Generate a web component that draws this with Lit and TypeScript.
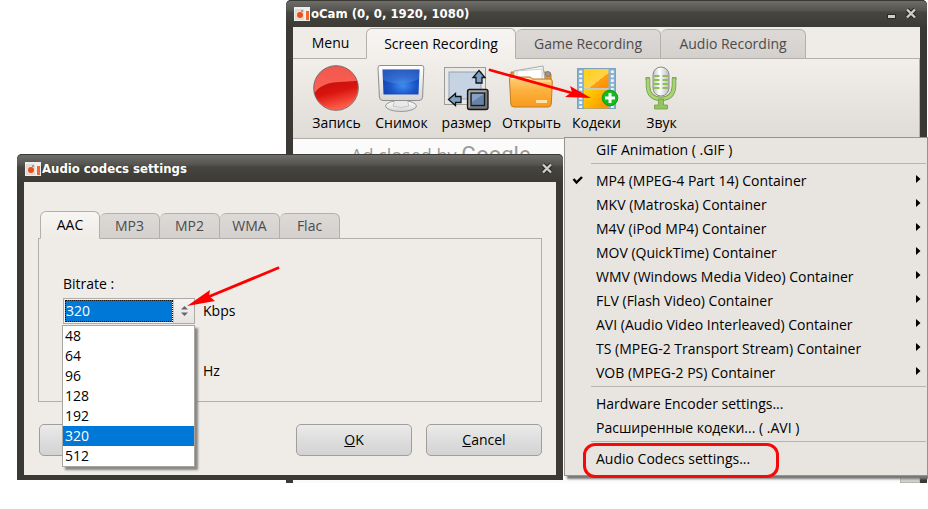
import { LitElement, html, css, svg, nothing } from "lit";
import { customElement, property, state } from "lit/decorators.js";
import { classMap } from "lit/directives/class-map.js";

const logo = html`<svg class="logo" width="18" height="16" viewBox="0 0 18 16" aria-hidden="true">
  <rect x="1" y="1" width="16" height="14" fill="#f0eeec" />
  <rect x="2" y="3" width="9" height="11" fill="#dedad7" />
  <circle cx="7" cy="9" r="4" fill="#f8d9cb" />
  <circle cx="7" cy="9" r="3" fill="#e8501a" />
  <circle cx="9" cy="5" r="1" fill="#888" />
  <rect x="13" y="5" width="3" height="9" fill="#ef6a2c" />
</svg>`;

const closeGlyph = html`<svg width="12" height="12" viewBox="0 0 12 12" aria-hidden="true">
  <path d="M2 1.500 L10 9.500 M10 1.500 L2 9.500" stroke="#2a2925" stroke-width="4.500" />
  <path d="M2 1.500 L10 9.500 M10 1.500 L2 9.500" stroke="#cfceca" stroke-width="2.400" />
</svg>`;

const icons: Record<string, unknown> = {
  record: svg`
    <defs>
      <linearGradient id="r1" x1="0" y1="0" x2="0" y2="1"><stop offset="0" stop-color="#f2564c"/><stop offset="1" stop-color="#ff6a5c"/></linearGradient>
      <linearGradient id="r2" x1="0" y1="0" x2="0.4" y2="1"><stop offset="0" stop-color="#c40d08"/><stop offset="0.5" stop-color="#d91510"/><stop offset="1" stop-color="#ff5a48"/></linearGradient>
    </defs>
    <circle cx="24" cy="24" r="22.3" fill="url(#r1)" stroke="#7b6a68" stroke-width="1"/>
    <path d="M2.400 29 C8 21 17 18.500 28 18 C36 17.500 42 17 45 17 A22 22 0 0 1 2.400 29Z" fill="url(#r2)"/>`,
  monitor: svg`
    <defs>
      <radialGradient id="m1" cx="0.55" cy="0.65" r="0.7"><stop offset="0" stop-color="#3f8df0"/><stop offset="0.5" stop-color="#1c55c8"/><stop offset="1" stop-color="#0b3aa8"/></radialGradient>
      <linearGradient id="m2" x1="0" y1="0" x2="0" y2="1"><stop offset="0" stop-color="#fff"/><stop offset="1" stop-color="#d6d6d6"/></linearGradient>
    </defs>
    <g transform="translate(-1 0)">
      <ellipse cx="25" cy="42" rx="15.500" ry="5.500" fill="url(#m2)" stroke="#9a9a9a"/>
      <path d="M19 35 H31 L33 42 Q25 45 17 42Z" fill="#e9e9e9" stroke="#c5c5c5"/>
      <path d="M4 1.500 H46 Q48 1.500 47.800 4 L46.600 33 Q46.400 36.500 43 36.500 H7 Q3.600 36.500 3.400 33 L2 4 Q2 1.500 4 1.500Z" fill="url(#m2)" stroke="#8f8f8f"/>
      <path d="M6.500 5.500 H43.500 L42.500 30.500 H7.500Z" fill="url(#m1)"/>
      <path d="M6.500 5.500 H43.500 L43 15 C30 21 18 21 7 16Z" fill="#6aa4ee" opacity="0.3"/>
    </g>`,
  resize: svg`
    <g transform="translate(-1 -1)">
      <rect x="3.500" y="4.500" width="41" height="37" fill="#e8e8e6" stroke="#9c9c9a"/>
      <rect x="8" y="9" width="32" height="27" fill="#c6d3e3" stroke="#93a2b5"/>
      <path d="M38 7.500 L44 14.500 H41 V20 H35 V14.500 H32Z" fill="#7ea0c8" stroke="#111" stroke-width="1.300"/>
      <path d="M7.500 36.500 L14.500 30.500 V33.500 H20 V39.500 H14.500 V42.500Z" fill="#7ea0c8" stroke="#111" stroke-width="1.300"/>
      <rect x="26.500" y="26.500" width="20.500" height="20" rx="2" fill="#777" stroke="#161616" stroke-width="1.300"/>
      <path d="M28 27.500 H46 L43 30 H30 V43 L27.500 45Z" fill="#a9a9a9"/>
      <rect x="30" y="30" width="13.500" height="12.500" fill="#6583a9" stroke="#1a1a1a" stroke-width="1.300"/>
      <path d="M31 31 H43 L31 39Z" fill="#86a3c6"/>
    </g>`,
  folder: svg`
    <defs>
      <linearGradient id="f1" x1="0" y1="0" x2="0" y2="1"><stop offset="0" stop-color="#ffcf7c"/><stop offset="0.450" stop-color="#fdb13f"/><stop offset="1" stop-color="#f79a1c"/></linearGradient>
    </defs>
    <path d="M4 8 H41 Q44 8 44 11 V18 H4Z" fill="#e59a2d" stroke="#b97a2a"/>
    <path d="M7 7 L36 2 L38 16 H7Z" fill="#f7f7f7" stroke="#a8a8a8"/>
    <path d="M10 7 L35 5 V16 H10Z" fill="#fff" stroke="#bdbdbd" stroke-width="0.700"/>
    <circle cx="41" cy="10" r="2.500" fill="#999" stroke="#666" stroke-width="0.600"/>
    <path d="M3.500 13 H23 L26 15 H43 Q45.500 15 45.300 18 L44.300 40 Q44 43 41 43 H7 Q4 43 3.800 40 L2.500 16 Q2.500 13 3.500 13Z" fill="url(#f1)" stroke="#c07d25"/>
    <path d="M4 14.500 H22 L25 17 H44" fill="none" stroke="#ffe8ba" stroke-width="1.200"/>
    <rect x="29" y="36" width="11" height="3" fill="#ffe3a6"/>`,
  film: svg`
    <defs>
      <linearGradient id="c1" x1="0" y1="0" x2="1" y2="1"><stop offset="0" stop-color="#ffd012"/><stop offset="0.600" stop-color="#ffd34a"/><stop offset="0.610" stop-color="#ff9f10"/><stop offset="1" stop-color="#ff8a00"/></linearGradient>
      <linearGradient id="c2" x1="0" y1="0" x2="1" y2="0.600"><stop offset="0" stop-color="#ffd800"/><stop offset="1" stop-color="#ff9700"/></linearGradient>
    </defs>
    <rect x="5.500" y="4.500" width="38" height="40" fill="#86b1d0" stroke="#7ba3c0"/>
    <rect x="12" y="5" width="24.500" height="19" fill="url(#c1)"/>
    <rect x="12" y="26" width="24.500" height="18.500" fill="url(#c2)"/>
    <path d="M12 25 H36.500" stroke="#c9cfc0" stroke-width="1.800"/>
    <path d="M8.700 6.500 V44 M40.300 6.500 V44" stroke="#eff6fa" stroke-width="3" stroke-dasharray="2.600 1.800"/>
    <circle cx="38" cy="34" r="7.800" fill="#14bb1c" stroke="#0e9a18"/>
    <path d="M38 29 V39 M33 34 H43" stroke="#fff" stroke-width="3"/>`,
  mic: svg`
    <defs>
      <linearGradient id="s1" x1="0" y1="0" x2="1" y2="0"><stop offset="0" stop-color="#c2c2c2"/><stop offset="0.400" stop-color="#fff"/><stop offset="1" stop-color="#bdbdbd"/></linearGradient>
    </defs>
    <path d="M8.500 14.500 H13 M35 14.500 H39.500" stroke="#7fae52" stroke-width="3"/>
    <path d="M11 14.500 V22 Q11.500 34.500 24 35 Q36.500 34.500 37 22 V14.500" fill="none" stroke="#6e9a45" stroke-width="4.500"/>
    <path d="M11 14.500 V22 Q11.500 34.500 24 35 Q36.500 34.500 37 22 V14.500" fill="none" stroke="#a9d375" stroke-width="3"/>
    <path d="M21.500 35 H26.500 V41 H30.500 V45 H17.500 V41 H21.500Z" fill="#93c45d" stroke="#72a048" stroke-width="0.800"/>
    <rect x="16" y="3" width="16" height="29" rx="8" fill="url(#s1)" stroke="#8a8a8a"/>
    <path d="M17 12 H22.500 M25.500 12 H31 M17 16 H22.500 M25.500 16 H31 M17 20 H22.500 M25.500 20 H31 M17 24 H22.500 M25.500 24 H31" stroke="#8cc152" stroke-width="1.800"/>`,
};

const tools = [
  { icon: "record", label: "Запись" },
  { icon: "monitor", label: "Снимок" },
  { icon: "resize", label: "размер" },
  { icon: "folder", label: "Открыть" },
  { icon: "film", label: "Кодеки" },
  { icon: "mic", label: "Звук" },
];

const containers = [
  "MP4 (MPEG-4 Part 14) Container",
  "MKV (Matroska) Container",
  "M4V (iPod MP4) Container",
  "MOV (QuickTime) Container",
  "WMV (Windows Media Video) Container",
  "FLV (Flash Video) Container",
  "AVI (Audio Video Interleaved) Container",
  "TS (MPEG-2 Transport Stream) Container",
  "VOB (MPEG-2 PS) Container",
];

const shared = css`
  * { box-sizing: border-box; }
  button, select { font: inherit; color: inherit; margin: 0; padding: 0; border: 0; background: none; }
  svg { display: block; flex: none; }
  .titlebar {
    display: flex; align-items: center; height: 28px; padding: 0 10px 0 7px;
    background: linear-gradient(#6e6d69, #55544f 36%, #46453f 44%, #3b3a35);
    border-radius: 5px 5px 0 0; border-top: 1px solid #3a3934;
    color: #fff; font: bold 13px/20px "DejaVu Sans Condensed", "DejaVu Sans", sans-serif;
  }
  .titlebar h1 { margin: 0 auto 0 0; font: inherit; white-space: nowrap; }
  .tab {
    height: 29px; align-self: flex-end; color: #4c4c4c;
    background: linear-gradient(#dcd9d7, #d4d0ce);
    border: 1px solid #b3b0ac; border-left-width: 0; border-radius: 6px 6px 0 0;
  }
  .tab.on {
    color: #000; background: linear-gradient(#f7f5f3, #efece7);
    border-left-width: 1px; border-bottom-color: transparent;
  }
`;

@customElement("ocam-window")
class OcamWindow extends LitElement {
  static styles = [shared, css`
    :host { display: block; border-radius: 5px 5px 0 0; background: #3a3934; }
    .buttons { display: flex; gap: 8px; align-items: center; }
    .titlebar { height: 27px; }
    .body { margin: 0 7px; background: #efece7; }
    .tabs { display: flex; height: 32px; box-shadow: inset 0 -1px #b3b0ac; }
    .menu { width: 73px; height: 32px; padding-left: 2px; }
    .tab { width: 145px; height: 30px; }
    .tab.on { width: 150px; height: 31px; background: linear-gradient(#f7f5f3, #f2efeb); border-bottom-color: #f2efeb; }
    .toolbar {
      display: flex; height: 80px; padding: 5px 0 0 11px;
      background: linear-gradient(#f2efeb, #dfdcd7);
      border: 1px solid #b3b0ac; border-width: 0 1px 1px 0;
    }
    .tool { width: 65px; display: flex; flex-direction: column; align-items: center; gap: 1px; line-height: 20px; white-space: nowrap; }
    .tool svg { margin-right: 2px; }
    .ad { display: flex; justify-content: space-between; min-height: 344px; background: #fbfbfb; }
    .ad p { margin: 0; padding: 3px 0 0 58px; color: #9a9a9a; font: 18px/26px "Open Sans", sans-serif; }
    .ad b { font: 22px/26px Roboto, sans-serif; }
    .scroll { width: 20px; background: #d4d2ce; border: 1px solid #b8b5b1; }
  `];

  render() {
    return html`
      <header class="titlebar">
        ${logo}<h1>oCam (0, 0, 1920, 1080)</h1>
        <div class="buttons">
          <button aria-label="Minimize"><svg width="12" height="12" viewBox="0 0 12 12">
            <rect x="2" y="6" width="9" height="5" fill="#2a2925" /><rect x="3" y="7" width="7" height="3" fill="#cfceca" /></svg></button>
          <button aria-label="Close">${closeGlyph}</button>
        </div>
      </header>
      <div class="body">
        <nav class="tabs">
          <button class="menu">Menu</button>
          <button class="tab on">Screen Recording</button>
          <button class="tab">Game Recording</button>
          <button class="tab">Audio Recording</button>
        </nav>
        <div class="toolbar">
          ${tools.map((t) => html`<button class="tool">
            <svg width="48" height="48" viewBox="0 0 48 48" aria-hidden="true">${icons[t.icon]}</svg>${t.label}
          </button>`)}
        </div>
        <div class="ad"><p>Ad closed by <b>Google</b></p><div class="scroll"></div></div>
      </div>`;
  }
}

@customElement("codec-menu")
class CodecMenu extends LitElement {
  @property({ type: Number }) checked = 0;

  static styles = [shared, css`
    :host {
      display: block; background: #e8e5e0; border: 1px solid #96938f;
      padding-bottom: 4px; box-shadow: 3px 3px 2px #777;
    }
    .item { position: relative; display: flex; align-items: center; width: 100%; height: 24px; padding: 0 6px 0 7px; text-align: left; white-space: nowrap; color: #000; }
    .mark { width: 24px; flex: none; }
    .label { flex: 1; }
    .sep { height: 7px; margin: 0 1px 0 26px; border: 0; border-top: 1px solid transparent; background: linear-gradient(#b7b4b0, #b7b4b0) top / 100% 1px no-repeat; }
    .ring { position: absolute; left: 18px; top: -4px; width: 196px; height: 35px; border: 3px solid #f50a0a; border-radius: 12px; }
  `];

  private item(label: string, o: { check?: boolean; sub?: boolean; ring?: boolean } = {}) {
    return html`<button class="item" role="menuitem">
      <span class="mark">${o.check
        ? html`<svg width="12" height="10" viewBox="0 0 12 10"><path d="M1.500 3 L4.500 6.500 L10 1" fill="none" stroke="#000" stroke-width="2.400" /></svg>`
        : nothing}</span>
      <span class="label">${label}</span>
      ${o.sub ? html`<svg width="5" height="12" viewBox="0 0 5 12"><path d="M0 0 L4.500 4 L0 8Z" fill="#000" /></svg>` : nothing}
      ${o.ring ? html`<span class="ring"></span>` : nothing}
    </button>`;
  }

  render() {
    return html`
      ${this.item("GIF Animation ( .GIF )")}
      <hr class="sep" />
      ${containers.map((c, i) => this.item(c, { check: i === this.checked, sub: true }))}
      <hr class="sep" />
      ${this.item("Hardware Encoder settings...")}
      ${this.item("Расширенные кодеки... ( .AVI )")}
      <hr class="sep" />
      ${this.item("Audio Codecs settings...", { ring: true })}`;
  }
}

@customElement("codec-dialog")
class CodecDialog extends LitElement {
  @state() private bitrate = "320";
  @state() private tab = "AAC";

  private rates = ["48", "64", "96", "128", "192", "320", "512"];

  static styles = [shared, css`
    :host { display: block; border-radius: 5px 5px 0 0; background: #3a3934; padding-bottom: 5px; }
    .body { margin: 0 7px; padding: 29px 14px 19px; background: #efece7; }
    .tabs { display: flex; height: 28px; padding-left: 2px; margin-bottom: -1px; position: relative; }
    .tab { width: 60px; height: 26px; }
    .tab.on { height: 28px; border-bottom-color: #efece7; }
    .panel { border: 1px solid #b3b0ac; padding: 35px 24px 17px; display: grid; gap: 4px; }
    .row { display: grid; grid-template-columns: 132px 1fr; column-gap: 8px; align-items: center; position: relative; height: 26px; }
    .row + .row { margin-top: 30px; }
    .head { height: 20px; line-height: 20px; }
    .combo { position: relative; display: flex; height: 26px; background: #f4f3f1; border: 1px solid #aeaba7; }
    .combo select {
      appearance: none; flex: 1; margin: 1px; padding: 0 22px 0 1px; color: #fff;
      background: linear-gradient(#0078d7, #0078d7) left / 107px 100% no-repeat, #f4f3f1;
    }
    .focus { position: absolute; left: 1px; top: 1px; bottom: 1px; width: 108px; border: 1px dotted #111; pointer-events: none; }
    .spin { position: absolute; right: 0; top: 0; bottom: 0; width: 21px; display: grid; place-items: center; pointer-events: none; border-left: 1px solid #c9c6c2; background: linear-gradient(#f4f3f1, #e6e4e1); }
    .list {
      position: absolute; left: -1px; top: 27px; z-index: 1; width: 133px; margin: 0; padding: 0; list-style: none;
      background: #fff; border: 1px solid #a9a6a2; box-shadow: 3px 3px 2px #8a8885; color: #000;
    }
    .list li { height: 20px; line-height: 20px; padding-left: 2px; }
    .list .sel { background: #0078d7; color: #fff; }
    .actions { display: flex; gap: 14px; margin-top: 22px; padding-left: 1px; }
    .btn { flex: none; width: 116px; height: 32px; border: 1px solid #a09e9b; border-radius: 5px; background: linear-gradient(#ebebeb, #dedede 48%, #d3d3d3); }
    .btn:first-child { margin-right: auto; }
  `];

  render() {
    return html`
      <header class="titlebar">
        ${logo}<h1>Audio codecs settings</h1>
        <button aria-label="Close">${closeGlyph}</button>
      </header>
      <div class="body">
        <div class="tabs" role="tablist">
          ${["AAC", "MP3", "MP2", "WMA", "Flac"].map((t) => html`<button
            role="tab" class=${classMap({ tab: true, on: t === this.tab })} @click=${() => (this.tab = t)}>${t}</button>`)}
        </div>
        <div class="panel">
          <label class="head" for="bitrate">Bitrate :</label>
          <div class="row">
            <div class="combo">
              <select id="bitrate" @change=${(e: Event) => (this.bitrate = (e.target as HTMLSelectElement).value)}>
                ${this.rates.map((r) => html`<option ?selected=${r === this.bitrate}>${r}</option>`)}
              </select>
              <span class="focus"></span>
              <span class="spin"><svg width="7" height="10" viewBox="0 0 7 10"><path d="M0 3.500 L3.500 0 L7 3.500Z M0 6.500 L3.500 10 L7 6.500Z" fill="#666" /></svg></span>
            </div>
            <span>Kbps</span>
            <ul class="list" role="listbox">
              ${this.rates.map((r) => html`<li role="option" class=${classMap({ sel: r === this.bitrate })} @click=${() => (this.bitrate = r)}>${r}</li>`)}
            </ul>
          </div>
          <div class="row"><span></span><span>Hz</span></div>
        </div>
        <div class="actions">
          <button class="btn" aria-label="Default"></button>
          <button class="btn"><u>O</u>K</button>
          <button class="btn"><u>C</u>ancel</button>
        </div>
      </div>`;
  }
}

@customElement("app-root")
class AppRoot extends LitElement {
  static styles = css`
    :host {
      display: block; position: relative; min-height: 100vh; overflow: hidden; background: #fff;
      color: #000; font: 14px/20px "Open Sans", "Noto Sans", sans-serif;
    }
    .main { position: absolute; left: 286px; right: 1px; top: 0; }
    .popup { position: absolute; left: 564px; right: 0; top: 137px; }
    .dialog { position: absolute; left: 17px; width: 546px; top: 154px; }
    .arrow { position: absolute; pointer-events: none; }
    .to-codecs { left: 488px; top: 66px; }
    .to-bitrate { left: 186px; top: 264px; }
  `;

  render() {
    return html`
      <ocam-window class="main"></ocam-window>
      <codec-dialog class="dialog"></codec-dialog>
      <codec-menu class="popup"></codec-menu>
      <svg class="arrow to-codecs" width="108" height="36" viewBox="0 0 108 36" aria-hidden="true">
        <path d="M2 4 L84 27" stroke="#f00" stroke-width="2.800" stroke-linecap="round" />
        <path d="M103 32 L82 20 L84 26 L77 31Z" fill="#f00" />
      </svg>
      <svg class="arrow to-bitrate" width="96" height="44" viewBox="0 0 96 44" aria-hidden="true">
        <path d="M92 4 L22 33" stroke="#f00" stroke-width="2.800" stroke-linecap="round" />
        <path d="M1 42 L24 26 L23 32 L29 37Z" fill="#f00" />
      </svg>`;
  }
}
